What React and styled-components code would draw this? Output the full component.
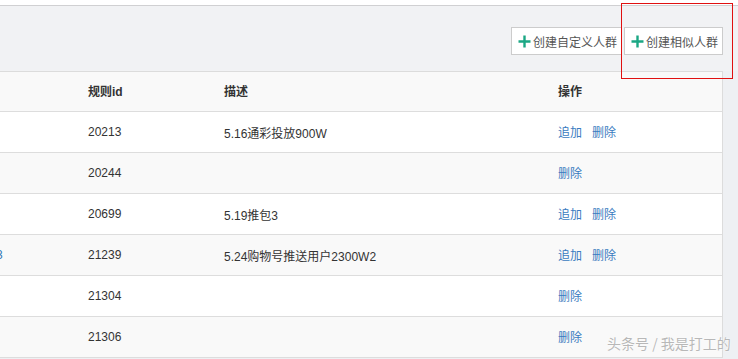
import React from 'react'
import styled, { createGlobalStyle } from 'styled-components'

const rows = [
  { id: '20213', desc: '5.16通彩投放900W', add: true },
  { id: '20244', desc: '', add: false },
  { id: '20699', desc: '5.19推包3', add: true },
  { id: '21239', desc: '5.24购物号推送用户2300W2', add: true, lead: '3' },
  { id: '21304', desc: '', add: false },
  { id: '21306', desc: '', add: false }
]

export default () => {
  return (
    <Page>
      <GlobalStyle />
      <TopGap />
      <Toolbar>
        <Button>
          <Plus />
          创建自定义人群
        </Button>
        <Button>
          <Plus />
          创建相似人群
        </Button>
      </Toolbar>
      <Table>
        <HeadRow>
          <Cell />
          <Cell>规则id</Cell>
          <Cell>描述</Cell>
          <Cell>操作</Cell>
        </HeadRow>
        {rows.map((row, i) => (
          <Row key={row.id} $striped={i % 2 === 1}>
            <LeadCell>{row.lead}</LeadCell>
            <Cell>{row.id}</Cell>
            <Cell>{row.desc}</Cell>
            <Cell>
              {row.add && <Link>追加</Link>}
              <Link>删除</Link>
            </Cell>
          </Row>
        ))}
      </Table>
      <Highlight />
      <Watermark>头条号 / 我是打工的</Watermark>
    </Page>
  )
}

const Plus = () => (
  <svg width="13" height="13" viewBox="0 0 13 13">
    <path d="M6.5 0.5v12M0.5 6.5h12" stroke="#1ba784" strokeWidth="2.4" />
  </svg>
)

const GlobalStyle = createGlobalStyle`
  body {
    margin: 0;
    background: #eef0f3;
    font-family: "Liberation Sans", "Noto Sans CJK SC", sans-serif;
    font-size: 12px;
    color: #333;
  }
`

const Page = styled.div`
  position: relative;
  width: 738px;
  height: 359px;
  overflow: hidden;
  background: #eef0f3;
`

const TopGap = styled.div`
  height: 5px;
  background: #fff;
  border-bottom: 1px solid #d0d0d2;
`

const Toolbar = styled.div`
  height: 65px;
  background: #f1f2f4;
  display: flex;
  justify-content: flex-end;
  align-items: flex-start;
  gap: 2px;
  padding: 21px 15px 0 0;
  box-sizing: border-box;
`

const Button = styled.div`
  height: 28px;
  box-sizing: border-box;
  display: flex;
  align-items: center;
  gap: 2px;
  padding: 0 4px 0 6px;
  background: #fff;
  border: 1px solid #ccc;
  color: #555;
  font-family: "Noto Sans CJK SC", sans-serif;
  font-size: 12px;
`

const Table = styled.div`
  width: 723px;
  background: #fff;
  border-top: 1px solid #dcdcdc;
  border-right: 1px solid #dcdcdc;
  box-sizing: border-box;
`

const Row = styled.div`
  display: grid;
  grid-template-columns: 88px 136px 334px 1fr;
  height: 41px;
  align-items: center;
  border-bottom: 1px solid #ddd;
  box-sizing: border-box;
  background: ${p => (p.$striped ? '#f9f9f9' : '#fff')};
`

const HeadRow = styled(Row)`
  height: 40px;
  background: #f9f9f9;
  font-weight: bold;
  font-size: 12px;
  color: #333;
  padding-bottom: 2px;
`

const Cell = styled.div`
  display: flex;
  gap: 10px;
  white-space: nowrap;
`

const LeadCell = styled(Cell)`
  color: #337ab7;
  margin-left: -4px;
  overflow: hidden;
`

const Link = styled.span`
  color: #3a7bc0;
  font-family: "Noto Sans CJK SC", sans-serif;
  margin-top: -2px;
`

const Highlight = styled.div`
  position: absolute;
  left: 621px;
  top: 3px;
  width: 112px;
  height: 76px;
  border: 1.5px solid #e01010;
  box-sizing: border-box;
`

const Watermark = styled.div`
  position: absolute;
  left: 607px;
  top: 333px;
  font-family: "Noto Sans CJK SC", sans-serif;
  font-size: 14px;
  color: #b8b8b8;
  text-shadow: 0 0 2px #fff, 0 0 1px #fff;
`
